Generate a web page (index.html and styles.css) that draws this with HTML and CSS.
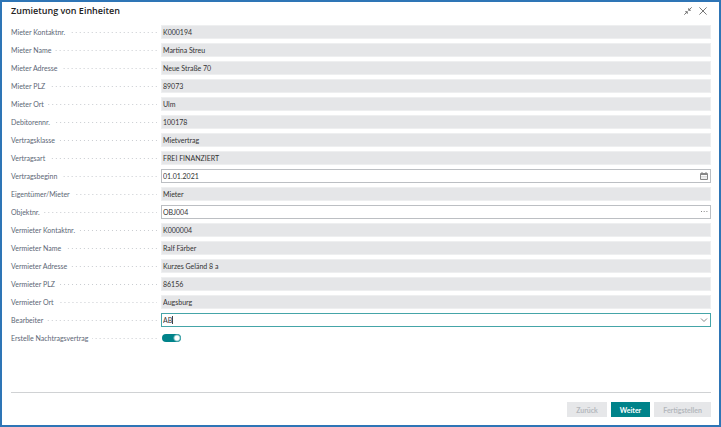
FILE: index.html
```html
<!DOCTYPE html>
<html lang="de">
<head>
<meta charset="utf-8">
<meta name="viewport" content="width=device-width, initial-scale=1">
<title>Zumietung von Einheiten</title>
<link rel="stylesheet" href="styles.css">
</head>
<body>
<main class="dialog">
  <header class="dialog-header">
    <h1 class="title">Zumietung von Einheiten</h1>
    <div class="window-actions">
      <button class="icon-button" type="button" aria-label="Verkleinern">
        <svg width="8" height="8" viewBox="0 0 8 8"><path d="M7.7.3 4.7 3.3M4.7 1.2v2.1h2.1M.3 7.7l3-3M1.2 4.7h2.1v2.1"/></svg>
      </button>
      <button class="icon-button" type="button" aria-label="Schließen">
        <svg width="8" height="8" viewBox="0 0 8 8"><path d="M.4.4l7.2 7.2M7.6.4.4 7.6"/></svg>
      </button>
    </div>
  </header>
  <form class="form" id="wizard">
    <div class="row"><label class="label" for="f1">Mieter Kontaktnr.</label><div class="field"><input id="f1" value="K000194" readonly></div></div>
    <div class="row"><label class="label" for="f2">Mieter Name</label><div class="field"><input id="f2" value="Martina Streu" readonly></div></div>
    <div class="row"><label class="label" for="f3">Mieter Adresse</label><div class="field"><input id="f3" value="Neue Straße 70" readonly></div></div>
    <div class="row"><label class="label" for="f4">Mieter PLZ</label><div class="field"><input id="f4" value="89073" readonly></div></div>
    <div class="row"><label class="label" for="f5">Mieter Ort</label><div class="field"><input id="f5" value="Ulm" readonly></div></div>
    <div class="row"><label class="label" for="f6">Debitorennr.</label><div class="field"><input id="f6" value="100178" readonly></div></div>
    <div class="row"><label class="label" for="f7">Vertragsklasse</label><div class="field"><input id="f7" value="Mietvertrag" readonly></div></div>
    <div class="row"><label class="label" for="f8">Vertragsart</label><div class="field"><input id="f8" value="FREI FINANZIERT" readonly></div></div>
    <div class="row"><label class="label" for="f9">Vertragsbeginn</label><div class="field editable"><input id="f9" value="01.01.2021">
      <button class="icon-button" type="button" aria-label="Datum wählen">
        <svg width="8" height="8" viewBox="0 0 8 8"><path d="M.5 1.5h7v6h-7zM.5 2.5h7M2 0v1.5M6 0v1.5"/><path class="thin" d="M1.5 4.5h5M1.5 6h5" stroke-dasharray="1 1"/></svg>
      </button></div></div>
    <div class="row"><label class="label" for="f10">Eigentümer/Mieter</label><div class="field"><input id="f10" value="Mieter" readonly></div></div>
    <div class="row"><label class="label" for="f11">Objektnr.</label><div class="field editable"><input id="f11" value="OBJ004">
      <button class="icon-button" type="button" aria-label="Objekt auswählen">
        <svg width="8" height="8" viewBox="0 0 8 8"><path d="M1 3.5h7" stroke-dasharray="1 1.7"/></svg>
      </button></div></div>
    <div class="row"><label class="label" for="f12">Vermieter Kontaktnr.</label><div class="field"><input id="f12" value="K000004" readonly></div></div>
    <div class="row"><label class="label" for="f13">Vermieter Name</label><div class="field"><input id="f13" value="Ralf Färber" readonly></div></div>
    <div class="row"><label class="label" for="f14">Vermieter Adresse</label><div class="field"><input id="f14" value="Kurzes Geländ 8 a" readonly></div></div>
    <div class="row"><label class="label" for="f15">Vermieter PLZ</label><div class="field"><input id="f15" value="86156" readonly></div></div>
    <div class="row"><label class="label" for="f16">Vermieter Ort</label><div class="field"><input id="f16" value="Augsburg" readonly></div></div>
    <div class="row"><label class="label" for="f17">Bearbeiter</label><div class="field editable active"><input id="f17" value="AB" role="combobox" aria-expanded="false"><span class="caret"></span>
      <button class="icon-button" type="button" aria-label="Liste öffnen">
        <svg width="8" height="8" viewBox="0 0 8 8"><path d="M1 2.5 4 5.5 7 2.5"/></svg>
      </button></div></div>
    <div class="row"><label class="label" for="f18">Erstelle Nachtragsvertrag</label><input class="toggle" id="f18" type="checkbox" role="switch" checked></div>
  </form>
  <footer class="dialog-footer">
    <button class="action" type="button" disabled>Zurück</button>
    <button class="action primary" type="submit" form="wizard">Weiter</button>
    <button class="action" type="button" disabled>Fertigstellen</button>
  </footer>
</main>
</body>
</html>
```
FILE: styles.css
```css
* {
  box-sizing: border-box;
}

body {
  margin: 0;
  background: #fff;
  color: #333;
  font-family: Lato, "Open Sans", sans-serif;
  font-size: 7px;
}

button,
input {
  font: inherit;
  color: inherit;
}

.dialog {
  display: flex;
  flex-direction: column;
  min-height: 100vh;
  padding: 2px 8px 8px 9px;
  border: 2px solid #2e75b6;
}

.dialog-header {
  display: flex;
  align-items: center;
  justify-content: space-between;
  height: 14px;
  padding-right: 4px;
}

.title {
  margin: 0;
  font-family: "Open Sans", sans-serif;
  font-size: 9px;
  line-height: 14px;
  font-weight: 600;
  color: #222;
}

.window-actions {
  display: flex;
  gap: 7px;
}

.icon-button {
  display: flex;
  flex: none;
  padding: 0;
  border: 0;
  background: none;
  color: #888;
}

.window-actions .icon-button {
  color: #777;
}

.icon-button svg {
  fill: none;
  stroke: currentColor;
  stroke-width: 1;
}

.icon-button .thin {
  opacity: 0.6;
}

.form {
  display: grid;
  gap: 4px;
  margin-top: 7px;
}

.row {
  display: grid;
  grid-template-columns: 146px 1fr;
  column-gap: 4px;
  align-items: center;
  height: 14px;
}

.label {
  display: flex;
  align-items: center;
  gap: 4px;
  line-height: 14px;
  color: #5c6675;
  white-space: nowrap;
}

.label::after {
  content: "";
  flex: 1;
  height: 1px;
  background: linear-gradient(90deg, transparent 3px, #c8cbd0 3px) right / 4px 1px;
}

.field {
  position: relative;
  display: flex;
  align-items: center;
  height: 14px;
  padding: 0 2px 0 1px;
  border: 1px solid #eeeff0;
  background: #e5e6e8;
}

.field input {
  flex: 1;
  min-width: 0;
  height: 12px;
  padding: 0;
  border: 0;
  outline: 0;
  background: none;
}

.field.editable {
  background: #fff;
  border-color: #bcbfc3;
}

.field.active {
  border-color: #45a5a8;
}

.caret {
  position: absolute;
  left: 10px;
  top: 2px;
  width: 1px;
  height: 8px;
  background: #444;
}

.toggle {
  appearance: none;
  justify-self: start;
  width: 19px;
  height: 8px;
  margin: 0 0 0 1px;
  border-radius: 4px;
  background: radial-gradient(circle at 15px 4px, #fff 2px, #00838a 4px);
}

.dialog-footer {
  display: flex;
  justify-content: flex-end;
  gap: 4px;
  margin-top: auto;
  padding-top: 9px;
  border-top: 1px solid #d0d2d4;
}

.action {
  min-width: 39px;
  height: 15px;
  padding: 0 9px;
  border: 0;
  background: #e6e7e9;
  color: #b4b8bd;
  font-weight: 700;
}

.action.primary {
  background: #00838a;
  color: #fff;
}
```
